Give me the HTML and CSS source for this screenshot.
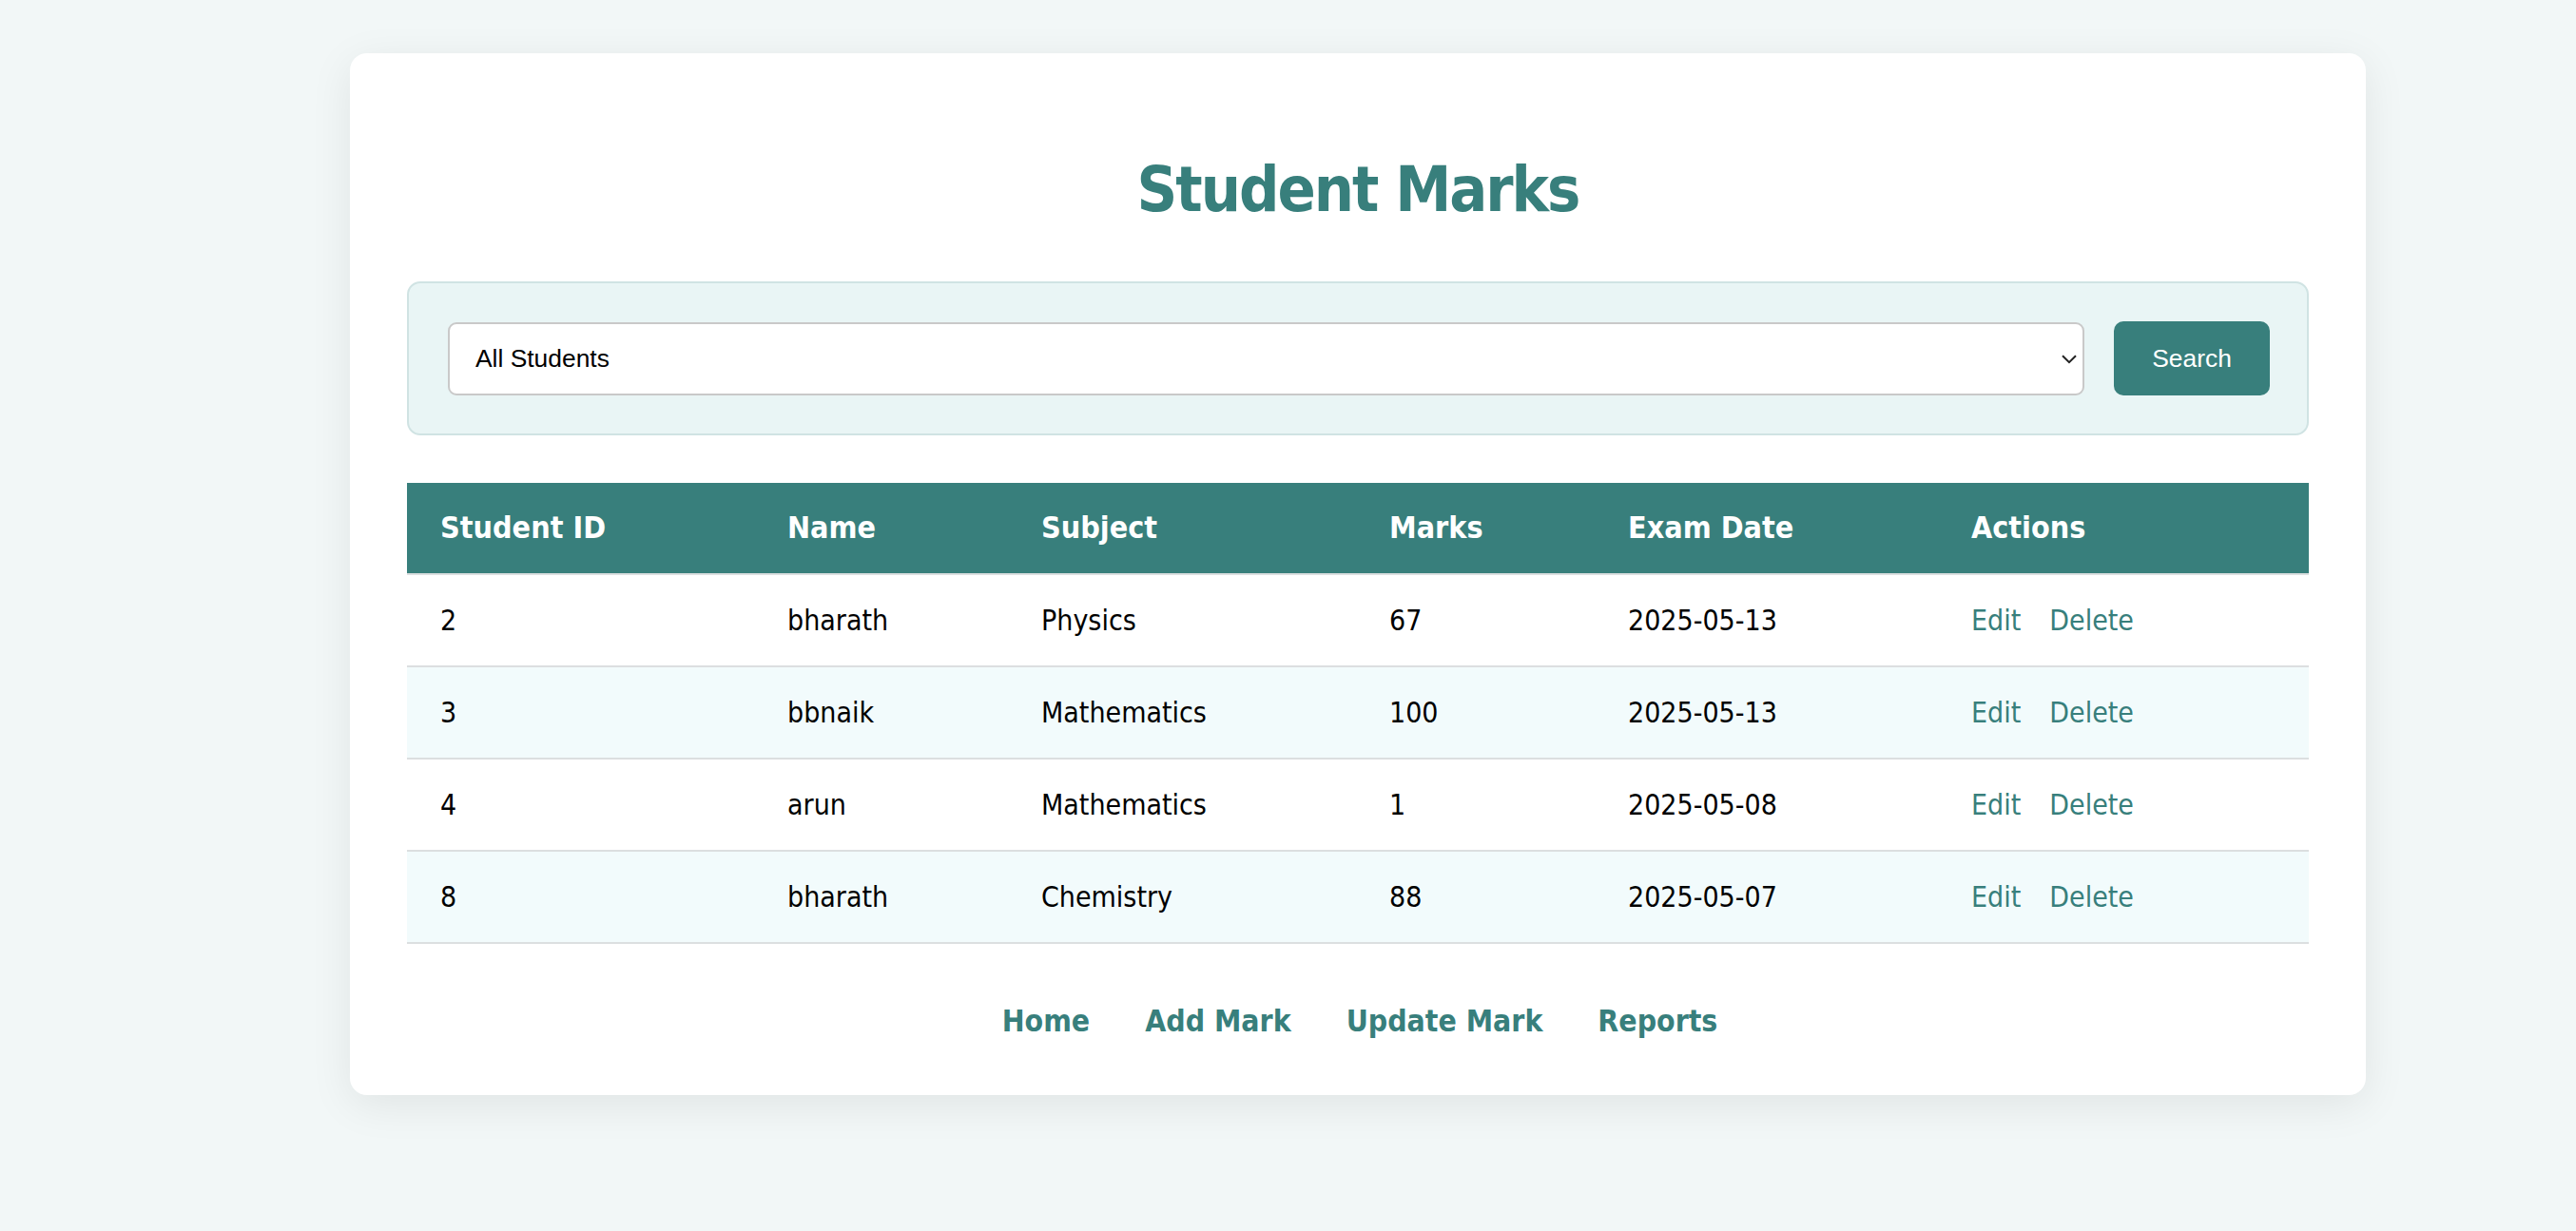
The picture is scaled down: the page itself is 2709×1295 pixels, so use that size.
FILE: index.html
```html
<!DOCTYPE html>
<html lang="en">
<head>
<meta charset="utf-8">
<title>Student Marks</title>
<link rel="stylesheet" href="styles.css">
</head>
<body>
<main class="card">
  <h1 class="title">Student Marks</h1>
  <form class="filter">
    <div class="select-wrap">
      <select class="student-select">
        <option>All Students</option>
      </select>
      <svg class="chevron" width="16" height="10" viewBox="0 0 16 10"><path d="M1 1.2 L8 8.2 L15 1.2" fill="none" stroke="#222" stroke-width="2"/></svg>
    </div>
    <button type="button" class="search-btn">Search</button>
  </form>
  <table class="marks">
    <colgroup>
      <col class="c1"><col class="c2"><col class="c3"><col class="c4"><col class="c5"><col class="c6">
    </colgroup>
    <thead>
      <tr><th>Student ID</th><th>Name</th><th>Subject</th><th>Marks</th><th>Exam Date</th><th>Actions</th></tr>
    </thead>
    <tbody>
      <tr><td>2</td><td>bharath</td><td>Physics</td><td>67</td><td>2025-05-13</td><td><a class="act edit" href="#">Edit</a><a class="act" href="#">Delete</a></td></tr>
      <tr><td>3</td><td>bbnaik</td><td>Mathematics</td><td>100</td><td>2025-05-13</td><td><a class="act edit" href="#">Edit</a><a class="act" href="#">Delete</a></td></tr>
      <tr><td>4</td><td>arun</td><td>Mathematics</td><td>1</td><td>2025-05-08</td><td><a class="act edit" href="#">Edit</a><a class="act" href="#">Delete</a></td></tr>
      <tr><td>8</td><td>bharath</td><td>Chemistry</td><td>88</td><td>2025-05-07</td><td><a class="act edit" href="#">Edit</a><a class="act" href="#">Delete</a></td></tr>
    </tbody>
  </table>
  <nav class="nav">
    <a href="#">Home</a>
    <a href="#">Add Mark</a>
    <a href="#">Update Mark</a>
    <a href="#">Reports</a>
  </nav>
</main>
</body>
</html>
```
FILE: styles.css
```css
html, body {
  margin: 0;
  padding: 0;
  background: #f2f7f7;
}
body {
  font-family: "DejaVu Sans Condensed", "DejaVu Sans", Verdana, sans-serif;
  font-stretch: condensed;
  color: #000;
  padding-top: 56px;
  padding-bottom: 143px;
}
.card {
  box-sizing: border-box;
  width: 2120px;
  margin-left: 368px;
  background: #fff;
  border-radius: 18px;
  padding: 60px 60px 59px 60px;
  box-shadow: 0 10px 45px rgba(0, 0, 0, 0.08);
}
.title {
  margin: 44px 0 56px;
  text-align: center;
  color: #387f7c;
  font-size: 66px;
  line-height: 80px;
  letter-spacing: -2px;
  font-weight: bold;
}
.filter {
  display: flex;
  align-items: center;
  gap: 31px;
  background: #e9f5f5;
  border: 2px solid #d0e3e3;
  border-radius: 14px;
  padding: 40px 39px 40px 41px;
  margin: 0;
}
.select-wrap {
  position: relative;
  flex: 1;
  display: flex;
}
.student-select {
  flex: 1;
  height: 77px;
  appearance: none;
  -webkit-appearance: none;
  background: #fff;
  border: 2px solid #c9c9c9;
  border-radius: 9px;
  padding: 0 50px 0 27px;
  font-family: "Liberation Sans", Arial, sans-serif;
  font-size: 26.4px;
  color: #000;
}
.chevron {
  position: absolute;
  right: 8px;
  top: 34px;
}
.search-btn {
  width: 164px;
  height: 78px;
  border: none;
  border-radius: 10px;
  background: #387f7c;
  color: #fff;
  font-family: "Liberation Sans", Arial, sans-serif;
  font-size: 26.4px;
  padding: 0;
}
.marks {
  width: 100%;
  margin-top: 50px;
  border-collapse: collapse;
  table-layout: fixed;
}
.c1 { width: 365px; }
.c2 { width: 267px; }
.c3 { width: 366px; }
.c4 { width: 251px; }
.c5 { width: 361px; }
.c6 { width: 390px; }
.marks th {
  background: #387f7c;
  color: #fff;
  text-align: left;
  font-weight: bold;
  font-size: 32px;
  line-height: 35px;
  padding: 30px 35px;
  border-bottom: 2px solid #dcdfe0;
}
.marks td {
  font-size: 30px;
  line-height: 33px;
  padding: 31px 35px;
  border-bottom: 2px solid #dcdfe0;
  white-space: nowrap;
}
.marks tbody tr:nth-child(even) td {
  background: #f2fbfc;
}
.act {
  color: #387f7c;
  text-decoration: none;
}
.act.edit {
  margin-right: 30px;
}
.nav {
  display: flex;
  justify-content: center;
  gap: 58px;
  margin-top: 62px;
  padding-left: 4px;
}
.nav a {
  color: #387f7c;
  text-decoration: none;
  font-weight: bold;
  font-size: 31.7px;
  line-height: 38px;
}
```
